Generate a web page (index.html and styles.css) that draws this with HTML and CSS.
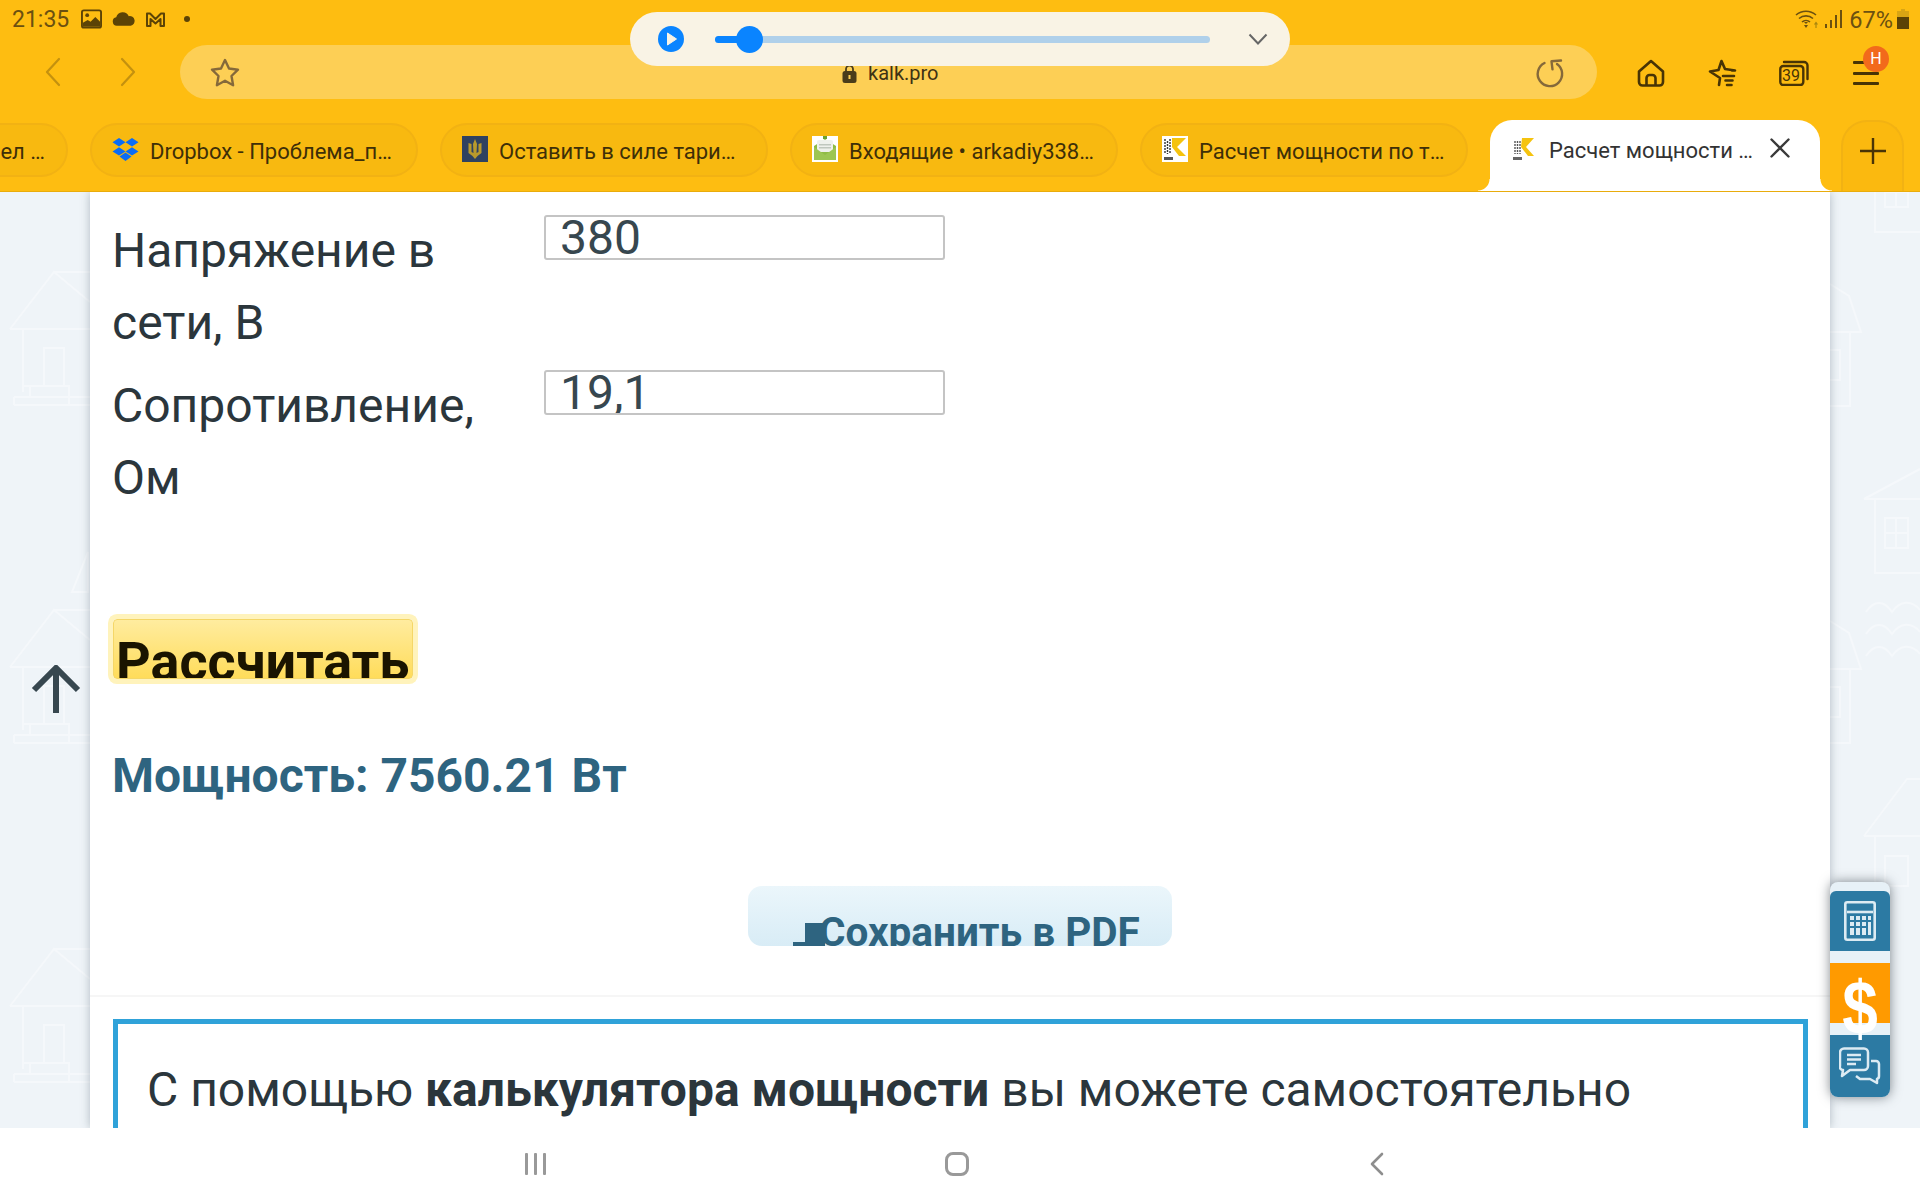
FILE: index.html
```html
<!DOCTYPE html>
<html lang="ru">
<head>
<meta charset="utf-8">
<title>Расчет мощности</title>
<link rel="stylesheet" href="styles.css">
</head>
<body>
<div class="screen">
  <header class="chrome">
    <div class="status">
      <div class="status-left">
        <span class="clock">21:35</span>
        <svg class="si" width="21" height="20" viewBox="0 0 22 20"><rect x="1" y="1" width="20" height="18" rx="2" fill="#FEBD11" stroke="#5C4306" stroke-width="2"/><circle cx="6.500" cy="6" r="2" fill="#5C4306"/><path d="M2 18v-4l5-3 3 2 5-5 5 5v5z" fill="#5C4306"/></svg>
        <svg class="si" width="23" height="14" viewBox="0 0 24 14"><path d="M5 14a4.500 4.500 0 0 1-.6-8.900A7 7 0 0 1 17.500 4 5 5 0 0 1 19.500 14z" fill="#5C4306"/></svg>
        <svg class="si" width="21" height="15" viewBox="0 0 21 15"><path d="M2 14V1.500h3L10.500 7 16 1.500h3V14h-3.500V7l-5 4.500-5-4.500v7z" fill="none" stroke="#5C4306" stroke-width="2" stroke-linejoin="round"/></svg>
        <span class="dot"></span>
      </div>
      <div class="status-right">
        <svg class="wifi" width="26" height="20" viewBox="0 0 26 20"><g fill="none" stroke="#6B5010" stroke-width="1.600"><path d="M1 6a15 15 0 0 1 20 0M4 9.500a10.500 10.500 0 0 1 14 0M7 13a6 6 0 0 1 8 0"/></g><path d="M11 15l-2-2h4zM11 19l-2-3h4z" fill="#6B5010"/><path d="M21 19v-5M19.500 15.500L21 13.500l1.500 2" stroke="#A9860F" fill="none" stroke-width="1.200"/></svg>
        <svg width="17" height="18" viewBox="0 0 17 18"><g fill="#6B5010"><rect x="0" y="14" width="2" height="4"/><rect x="5" y="10" width="2" height="8"/><rect x="10" y="5" width="2" height="13"/><rect x="15" y="0" width="2" height="18"/></g></svg>
        <span class="pct">67%</span>
        <svg width="12" height="20" viewBox="0 0 12 20"><path d="M4 0h4v2h4v18H0V2h4z" fill="#D9A514"/><rect y="8" width="12" height="12" fill="#5C4306"/></svg>
      </div>
    </div>
    <div class="navrow">
      <div class="arrows">
        <svg width="16" height="30" viewBox="0 0 16 30"><path d="M14 2L2 15l12 13" fill="none" stroke="#C4910F" stroke-width="2.200" stroke-linecap="round" stroke-linejoin="round"/></svg>
        <svg width="16" height="30" viewBox="0 0 16 30"><path d="M2 2l12 13L2 28" fill="none" stroke="#C4910F" stroke-width="2.200" stroke-linecap="round" stroke-linejoin="round"/></svg>
      </div>
      <div class="address">
        <svg width="30" height="30" viewBox="0 0 30 30"><path d="M15 2l4 8.500 9 1.200-6.500 6.300 1.600 9.200L15 22.800l-8.100 4.400 1.600-9.200L2 11.700l9-1.200z" fill="none" stroke="#85693A" stroke-width="2.400" stroke-linejoin="round"/></svg>
        <div class="url">
          <svg width="15" height="19" viewBox="0 0 15 19"><path d="M4 8V5a3.500 3.500 0 0 1 7 0v3" fill="none" stroke="#4A3C1A" stroke-width="1.800"/><rect x="0.500" y="7" width="14" height="12" rx="2.500" fill="#4A3C1A"/><rect x="6.500" y="11" width="2" height="4" fill="#FDCF55"/></svg>
          <span>kalk.pro</span>
        </div>
        <svg width="30" height="30" viewBox="0 0 30 30"><path d="M9.500 5A12.200 12.200 0 1 0 22 6" fill="none" stroke="#85693A" stroke-width="2.400" stroke-linecap="round"/><path d="M26 2.500l-9.500.8 1 8" fill="none" stroke="#85693A" stroke-width="2.400" stroke-linecap="round" stroke-linejoin="round"/></svg>
      </div>
      <div class="tools">
        <svg width="28" height="28" viewBox="0 0 28 28"><path d="M2 12.500L14 2l12 10.500V23a3.500 3.500 0 0 1-3.500 3.500h-17A3.500 3.500 0 0 1 2 23z" fill="none" stroke="#483405" stroke-width="2.600" stroke-linejoin="round"/><path d="M9.500 26v-7a3 3 0 0 1 3-3h3a3 3 0 0 1 3 3v7" fill="none" stroke="#483405" stroke-width="2.600"/></svg>
        <svg width="30" height="28" viewBox="0 0 30 28"><path d="M12 26l1-7-10-6.500 8.500-1.500L14.500 2l3.500 8 10 1.500h-3M16 17h11M18.500 21.500h7M20 26h4.500" fill="none" stroke="#483405" stroke-width="2.600" stroke-linecap="round" stroke-linejoin="round"/></svg>
        <div class="tabcount">
          <svg width="30" height="26" viewBox="0 0 30 26"><rect x="1.300" y="6" width="23" height="19" rx="3" fill="none" stroke="#483405" stroke-width="2.400"/><path d="M5 2h20a3.500 3.500 0 0 1 3.500 3.500V19" fill="none" stroke="#483405" stroke-width="2.400" stroke-linecap="round"/></svg>
          <span>39</span>
        </div>
        <div class="menu">
          <span></span><span></span><span></span>
          <b class="badge">Н</b>
        </div>
      </div>
    </div>
    <div class="tabrow">
      <div class="tab tab-first"><span>ел …</span></div>
      <div class="tab">
        <svg class="fav" width="27" height="23" viewBox="0 0 27 23"><path d="M7 0l6.500 4.200L7 8.400.5 4.200zM20 0l6.500 4.200L20 8.400l-6.500-4.200zM7 9.200l6.500 4.200L7 17.600.5 13.400zM20 9.200l6.500 4.200-6.500 4.200-6.500-4.200zM13.500 14.600l6 3.900-6 4.500-6-4.500z" fill="#0A6CF5"/></svg>
        <span>Dropbox - Проблема_п…</span>
      </div>
      <div class="tab">
        <svg class="fav" width="26" height="26" viewBox="0 0 26 26"><rect width="26" height="26" fill="#2F4260"/><path d="M13 3l2 5-.5 9 2-1V8l3-1v10l-4 3-2.500 3-2.500-3-4-3V7l3 1v8l2 1-.5-9z" fill="#B99A2C"/></svg>
        <span>Оставить в силе тари…</span>
      </div>
      <div class="tab">
        <svg class="fav" width="26" height="26" viewBox="0 0 26 26"><rect width="26" height="26" fill="#fff"/><path d="M2 10L13 3l11 7v14H2z" fill="#8FBC45"/><rect x="5" y="4" width="16" height="12" rx="2" fill="#EEF1EC"/><rect x="7" y="8" width="12" height="1.500" fill="#BFC7BE"/><rect x="7" y="11" width="12" height="1.500" fill="#BFC7BE"/><rect x="11" y="0" width="4" height="3" fill="#6CA32F"/><path d="M2 11l11 8 11-8v13H2z" fill="#9CC653"/></svg>
        <span>Входящие • arkadiy338…</span>
      </div>
      <div class="tab">
        <svg class="fav" width="26" height="26" viewBox="0 0 26 26"><rect width="26" height="26" fill="#fff"/><path d="M10 2h14l-9 9 9 9h-7l-7-9z" fill="#F5C30F"/><path d="M3 3v15M5.500 5v13M8 3v15" stroke="#333" stroke-width="1.400" stroke-dasharray="2 1"/><path d="M2 21h9v3H2z" fill="#555"/></svg>
        <span>Расчет мощности по т…</span>
      </div>
      <div class="tab tab-active">
        <svg class="fav" width="26" height="26" viewBox="0 0 26 26"><path d="M10 2h12l-8 9 8 9h-6l-7-9z" fill="#F5C30F"/><path d="M3 5v13M5.500 5v13M8 5v13" stroke="#555" stroke-width="1.400" stroke-dasharray="2 1"/><path d="M1 21h9v3H1z" fill="#666"/></svg>
        <span>Расчет мощности …</span>
        <svg class="close" width="20" height="20" viewBox="0 0 20 20"><path d="M1.500 1.500l17 17M18.500 1.500l-17 17" stroke="#3A3A3A" stroke-width="2.400" stroke-linecap="round"/></svg>
      </div>
      <div class="newtab">
        <svg width="26" height="26" viewBox="0 0 26 26"><path d="M13 0v26M0 13h26" stroke="#4A3406" stroke-width="2.400"/></svg>
      </div>
    </div>
    <div class="media">
      <svg width="26" height="26" viewBox="0 0 26 26"><circle cx="13" cy="13" r="13" fill="#0A84FF"/><path d="M9.500 7l9 6-9 6z" fill="#F9F3E5" stroke="#F9F3E5" stroke-linejoin="round"/></svg>
      <div class="track"><div class="played"></div><div class="thumb"></div></div>
      <svg width="20" height="12" viewBox="0 0 20 12"><path d="M1.500 1.500L10 10.500l8.500-9" fill="none" stroke="#666" stroke-width="2"/></svg>
    </div>
  </header>

  <main class="view">
    <svg class="decor" width="1920" height="936" viewBox="0 0 1920 936" aria-hidden="true">
      <defs>
        <g id="houseL" fill="none" stroke="#F5F8FB" stroke-width="2">
          <path d="M10 57L54 0l36 30M54 0h36M10 57h80M23 57v63M44 114V76h20v38M14 133h76M14 125h76M14 125v8M30 114h39v19M23 114h7M30 125v-11"/>
        </g>
        <g id="houseA" fill="none" stroke="#F5F8FB" stroke-width="2">
          <path d="M1830 0l19 12 12 36h-31M1850 48v74h-20M1830 66h10v30h-10"/>
        </g>
        <g id="houseB" fill="none" stroke="#F5F8FB" stroke-width="2">
          <path d="M1864 39l56-30M1864 39h56M1875 39v74h45M1885 58h23v30h-23zM1896 58v30M1885 73h23"/>
        </g>
      </defs>
      <use href="#houseL" y="80"/><use href="#houseL" y="418"/><use href="#houseL" y="757"/>
      <use href="#houseA" y="92"/><use href="#houseA" y="429"/>
      <use href="#houseB" y="-73"/><use href="#houseB" y="268"/>
      <path d="M72 400l16-40v40z" fill="none" stroke="#F5F8FB" stroke-width="2"/>
      <path d="M1866 420c8-12 18-12 26 0 8-12 20-12 28-2M1866 442c8-12 18-12 26 0 8-12 20-12 28-2M1866 464c8-12 18-12 26 0 8-12 20-12 28-2" fill="none" stroke="#F5F8FB" stroke-width="2"/>
      <path d="M1864 644l43-57h13M1864 644h56M1875 644v100M1885 664h23v30h-23z" fill="none" stroke="#F5F8FB" stroke-width="2"/>
    </svg>

    <section class="panel">
      <form class="calc-form">
        <label class="field-label" for="u">Напряжение в сети, В</label>
        <input class="field" id="u" type="text" value="380">
        <label class="field-label" for="r">Сопротивление, Ом</label>
        <input class="field" id="r" type="text" value="19,1">
      </form>
      <div class="calc-btn"><span>Рассчитать</span></div>
      <p class="result">Мощность: 7560.21 Вт</p>
      <div class="pdf-wrap">
        <div class="pdf-btn">
          <svg class="pdf-ico" width="32" height="23" viewBox="0 0 32 23"><path d="M12 0h20v23H0l0-4h12z" fill="#2E6480"/></svg>
          <span>Сохранить в PDF</span>
        </div>
      </div>
      <div class="divider"></div>
      <div class="frame">
        <p>С помощью <strong>калькулятора мощности</strong> вы можете самостоятельно</p>
      </div>
    </section>

    <svg class="to-top" width="50" height="50" viewBox="0 0 50 50"><path d="M25 48V4M3 25L25 3l22 22" fill="none" stroke="#37474F" stroke-width="6"/></svg>

    <aside class="sidebar">
      <div class="side-item side-blue side-first">
        <svg width="32" height="40" viewBox="0 0 32 40"><g fill="none" stroke="#DCEBF3" stroke-width="2.600"><rect x="1.300" y="1.300" width="29.400" height="37.400" rx="2"/><path d="M3 11h26"/></g><g fill="#DCEBF3"><rect x="6" y="15" width="4" height="4"/><rect x="12" y="15" width="4" height="4"/><rect x="18" y="15" width="4" height="4"/><rect x="24" y="15" width="3" height="4"/><rect x="6" y="21" width="4" height="4"/><rect x="12" y="21" width="4" height="4"/><rect x="18" y="21" width="4" height="4"/><rect x="24" y="21" width="3" height="13"/><rect x="6" y="27" width="4" height="7"/><rect x="12" y="27" width="4" height="7"/><rect x="18" y="27" width="4" height="7"/></g></svg>
      </div>
      <div class="side-item side-orange"><span class="dollar">$</span></div>
      <div class="side-item side-blue side-last">
        <svg width="42" height="38" viewBox="0 0 42 38"><g fill="none" stroke="#DCEBF3" stroke-width="2.500" stroke-linejoin="round"><path d="M5 1.500h20a4 4 0 0 1 4 4v13.500a4 4 0 0 1-4 4H11l-8 6 1-6a3 3 0 0 1-3-4V5.500a4 4 0 0 1 4-4z"/><path d="M32 14h5a3 3 0 0 1 3 3v12a3 3 0 0 1-2 3v4l-7-4H21l-4-3"/><path d="M8 8h14M8 12.500h14M8 17h9"/></g></svg>
      </div>
    </aside>
  </main>

  <footer class="sysnav">
    <div class="recents"><span></span><span></span><span></span></div>
    <div class="homebtn"></div>
    <svg width="14" height="24" viewBox="0 0 14 24"><path d="M12 2L2 12l10 10" fill="none" stroke="#8E8E8E" stroke-width="2.600" stroke-linecap="round" stroke-linejoin="round"/></svg>
  </footer>
</div>
</body>
</html>
```
FILE: styles.css
```css
* { box-sizing: border-box; }
html, body { margin: 0; padding: 0; }
body { font-family: Roboto, "Liberation Sans", sans-serif; background: #fff; }
.screen { width: 1920px; height: 1200px; display: flex; flex-direction: column; overflow: hidden; }

/* browser chrome */
.chrome { position: relative; flex: none; height: 192px; background: #FEBD11; border-bottom: 1px solid #E9AC0C; z-index: 3; }
.status { height: 45px; display: flex; justify-content: space-between; align-items: flex-start; padding: 7px 11px 0 12px; color: #6B5010; }
.status-left { display: flex; align-items: center; height: 24px; }
.clock { font-size: 23px; line-height: 24px; width: 69px; padding-top: 1px; }
.si { margin-right: 10px; }
.dot { width: 6px; height: 6px; border-radius: 50%; background: #5C4306; margin-left: 8px; }
.status-right { display: flex; align-items: center; height: 24px; gap: 6px; }
.wifi { margin-right: -2px; }
.pct { font-size: 23.500px; line-height: 24px; margin: 0 -2px 0 1px; padding-top: 1px; }
.navrow { height: 54px; display: flex; align-items: center; }
.arrows { width: 180px; display: flex; gap: 59px; padding-left: 45px; }
.address { position: relative; width: 1417px; height: 54px; border-radius: 27px; background: #FDCF55; display: flex; align-items: center; justify-content: space-between; padding: 2px 32px 0 30px; }
.url { position: absolute; left: 662px; top: 16px; display: flex; align-items: center; gap: 11px; font-size: 20px; line-height: 24px; color: #3E3214; }
.tools { flex: 1; display: flex; align-items: center; padding: 2px 0 0 40px; gap: 42px; }
.tabcount { position: relative; width: 30px; height: 26px; color: #483405; }
.tabcount span { position: absolute; left: 3px; top: 7px; font-size: 16px; line-height: 17px; }
.menu { position: relative; width: 26px; height: 24px; display: flex; flex-direction: column; justify-content: space-between; margin-left: 2px; }
.menu span { display: block; height: 3px; background: #483405; border-radius: 1px; }
.badge { position: absolute; left: 10px; top: -15px; width: 26px; height: 26px; border-radius: 50%; background: #F26A1B; color: #fff; font: 400 16px/26px Roboto, sans-serif; text-align: center; }

/* tabs */
.tabrow { margin-top: 21px; height: 71px; display: flex; gap: 22px; margin-left: -260px; }
.tab { flex: none; width: 328px; height: 54px; margin-top: 3px; border-radius: 27px; background: #F8B910; border: 2px solid #F2B213; display: flex; align-items: center; padding: 2px 0 0 20px; font-size: 22px; color: #3E2F08; white-space: nowrap; }
.tab span { margin-left: 11px; }
.tab .fav { margin-top: -4px; }
.tab-first { justify-content: flex-end; padding: 2px 21px 0 0; }
.tab-active { position: relative; height: 71px; width: 330px; margin-top: 0; padding: 0 0 10px 22px; background: #fff; border: 0; border-radius: 22px 22px 0 0; color: #333; }
.tab-active::before, .tab-active::after { content: ""; position: absolute; bottom: 0; width: 12px; height: 12px; }
.tab-active::before { left: -12px; background: radial-gradient(circle at 0 0, #FEBD11 11px, #fff 12px); }
.tab-active::after { right: -12px; background: radial-gradient(circle at 100% 0, #FEBD11 11px, #fff 12px); }
.close { margin: -6px 0 0 17px; }
.newtab { flex: none; width: 63px; height: 71px; margin-top: 0; border-radius: 26px 26px 0 0; border: 2px solid #F2B213; border-bottom: 0; background: #FBB90F; display: flex; align-items: flex-start; justify-content: center; padding-top: 16px; margin-left: -1px; }

.media { position: absolute; left: 630px; top: 12px; width: 660px; height: 54px; border-radius: 27px; background: #F9F3E5; display: flex; align-items: center; padding: 0 22px 0 28px; }
.media svg { flex: none; }
.track { position: relative; flex: none; width: 495px; height: 7px; margin-left: 31px; margin-right: 38px; border-radius: 4px; background: #B0D0EA; }
.played { position: absolute; left: 0; top: 0; height: 7px; width: 34px; border-radius: 4px; background: #0A84FF; }
.thumb { position: absolute; left: 21px; top: -10px; width: 27px; height: 27px; border-radius: 50%; background: #0A84FF; }

/* page */
.view { position: relative; flex: 1; min-height: 0; overflow: hidden; background: #EFF4F8; }
.decor { position: absolute; left: 0; top: 0; }
.panel { position: relative; width: 1740px; height: 100%; margin: 0 auto; padding: 23px 22px 0 22px; background: #fff; box-shadow: 0 0 9px rgba(60, 80, 95, .35); color: #2B363C; }
.calc-form { display: grid; grid-template-columns: 432px 401px; row-gap: 11px; }
.field-label { font-size: 48px; line-height: 72px; height: 144px; padding-right: 22px; }
.field { width: 401px; height: 45px; padding: 0 14px; border: 2px solid #C4C4C4; border-radius: 3px; font: 400 48px/41px Roboto, sans-serif; color: #37474F; background: #fff; }
.calc-btn { width: 300px; height: 60px; margin: 105px 0 0 1px; overflow: hidden; border: 1px solid #F5D767; border-radius: 4px; background: linear-gradient(#FFEC9F, #FFDC5A); box-shadow: 0 0 0 5px #FFF3BC; padding: 0 0 0 2px; color: #1A1400; font-size: 54px; font-weight: 700; line-height: 84px; white-space: nowrap; }
.calc-btn span { display: block; height: 60px; }
.result { margin: 61px 0 0; font-size: 48px; font-weight: 700; line-height: 72px; color: #2E6480; }
.pdf-wrap { display: flex; justify-content: center; margin-top: 74px; }
.pdf-btn { position: relative; width: 424px; height: 60px; overflow: hidden; border-radius: 14px; background: linear-gradient(#EBF6FB, #D8ECF6); padding-left: 71px; color: #2E6480; font-size: 40.500px; font-weight: 700; line-height: 92px; white-space: nowrap; }
.pdf-ico { position: absolute; left: 45px; bottom: 0; }
.pdf-btn span { position: relative; }
.divider { height: 2px; margin: 49px -22px 0 -22px; background: #F6F6F6; }
.frame { margin: 22px 0 0 1px; height: 300px; border: 5px solid #2FA2D9; padding: 0 0 0 29px; }
.frame p { margin: 30px 0 0; font-size: 48px; line-height: 72px; white-space: nowrap; }

.to-top { position: absolute; left: 31px; top: 473px; }

.sidebar { position: absolute; left: 1830px; top: 690px; width: 60px; height: 215px; padding-top: 9px; border-radius: 8px; background: #E7F1F7; box-shadow: 0 0 12px rgba(30, 40, 50, .55); }
.side-item { display: flex; align-items: center; justify-content: center; width: 60px; height: 60px; }
.side-blue { background: #2C7AA3; }
.side-first { border-radius: 6px 6px 0 0; margin-bottom: 12px; }
.side-orange { background: #FF9A00; margin-bottom: 12px; }
.side-last { border-radius: 0 0 8px 8px; height: 62px; }
.dollar { font: 700 64px/60px "Liberation Sans", Arial, sans-serif; color: #fff; padding-top: 26px; transform: scaleY(1.18); }

/* system nav */
.sysnav { position: relative; flex: none; height: 72px; background: #fff; z-index: 2; }
.recents { position: absolute; left: 525px; top: 25px; display: flex; gap: 6px; }
.recents span { width: 3px; height: 22px; background: #999; border-radius: 1px; }
.homebtn { position: absolute; left: 945px; top: 24px; width: 24px; height: 24px; border: 3px solid #999; border-radius: 8px; }
.sysnav svg { position: absolute; left: 1370px; top: 24px; }
```
